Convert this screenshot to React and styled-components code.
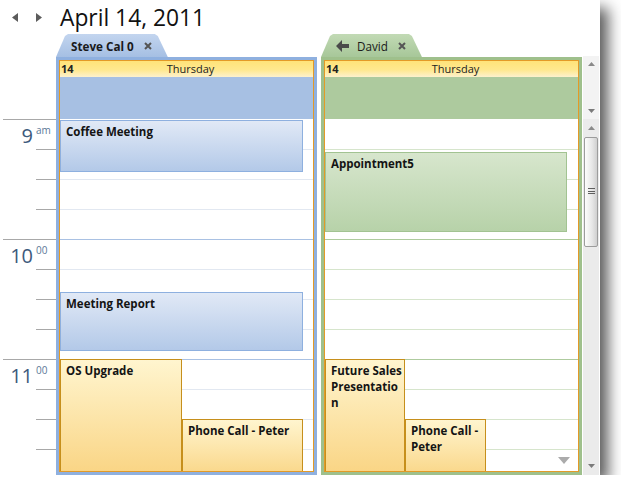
import React from "react";
import styled, { createGlobalStyle } from "styled-components";

const GlobalStyle = createGlobalStyle`
  body {
    margin: 0;
    background: #ffffff;
    font-family: "Open Sans", "Noto Sans", sans-serif;
  }
`;

const palettes = {
  blue: {
    frame: "#8fb0df",
    tabTop: "#c3d5ef",
    tabBottom: "#a5bfe3",
    allDay: "#a7c0e3",
    hour: "#a9c1e3",
    quarter: "#e2e8f1",
  },
  green: {
    frame: "#9fc08c",
    tabTop: "#c2dab5",
    tabBottom: "#a7c799",
    allDay: "#adca9e",
    hour: "#aecb9e",
    quarter: "#d6e5cc",
  },
};

const eventTones = {
  blue: { top: "#e1e9f6", bottom: "#b3c9e8", border: "#8eb0df" },
  green: { top: "#d7e6cd", bottom: "#b7d2a9", border: "#a2c392" },
  yellow: { top: "#fff5cf", bottom: "#f9d27e", border: "#c68f1c" },
};

const calendars = [
  {
    id: "steve",
    name: "Steve Cal 0",
    tone: "blue",
    active: true,
    events: [
      { title: "Coffee Meeting", tone: "blue", top: 1, left: 0, width: 243, height: 52 },
      { title: "Meeting Report", tone: "blue", top: 173, left: 0, width: 243, height: 59 },
      { title: "OS Upgrade", tone: "yellow", top: 240, left: 0, width: 122, height: 125 },
      { title: "Phone Call - Peter", tone: "yellow", top: 300, left: 122, width: 121, height: 65 },
    ],
  },
  {
    id: "david",
    name: "David",
    tone: "green",
    active: false,
    more: true,
    events: [
      { title: "Appointment5", tone: "green", top: 33, left: 0, width: 242, height: 80 },
      { title: "Future Sales Presentation", tone: "yellow", top: 240, left: 0, width: 80, height: 125 },
      { title: "Phone Call - Peter", tone: "yellow", top: 300, left: 80, width: 81, height: 65 },
    ],
  },
];

const hours = [
  { hour: "9", sup: "am" },
  { hour: "10", sup: "00" },
  { hour: "11", sup: "00" },
];

const App = () => {
  return (
    <>
      <GlobalStyle />
      <Window>
        <TopBar>
          <NavButton aria-label="previous day">
            <svg width="6" height="9" viewBox="0 0 6 9">
              <polygon points="6,0 6,9 0,4.5" fill="#5c5c5c" />
            </svg>
          </NavButton>
          <NavButton aria-label="next day">
            <svg width="6" height="9" viewBox="0 0 6 9">
              <polygon points="0,0 0,9 6,4.5" fill="#5c5c5c" />
            </svg>
          </NavButton>
          <Title>April 14, 2011</Title>
        </TopBar>

        <Body>
          <Ruler>
            {hours.map((h) => (
              <HourBlock key={h.hour}>
                <Quarter $hour>
                  <HourLabel>
                    <HourNum>{h.hour}</HourNum>
                    <HourSup>{h.sup}</HourSup>
                  </HourLabel>
                </Quarter>
                <Quarter />
                <Quarter />
                <Quarter />
              </HourBlock>
            ))}
          </Ruler>

          {calendars.map((cal) => (
            <Pane key={cal.id}>
              <Tab $tone={cal.tone}>
                {!cal.active && (
                  <svg width="13" height="12" viewBox="0 0 13 12">
                    <polygon points="0,6 6,0 6,4 13,4 13,8 6,8 6,12" fill="#4a4a4a" />
                  </svg>
                )}
                <TabLabel $active={cal.active}>{cal.name}</TabLabel>
                <CloseIcon width="8" height="8" viewBox="0 0 8 8">
                  <path d="M1 1 L7 7 M7 1 L1 7" stroke="#555" strokeWidth="2" />
                </CloseIcon>
              </Tab>
              <Frame $tone={cal.tone}>
                <Inner>
                  <DayHeader>
                    <DayNum>14</DayNum>
                    <DayName>Thursday</DayName>
                  </DayHeader>
                  <AllDay $tone={cal.tone} />
                  <Slots>
                    {Array.from({ length: 12 }).map((_, i) => (
                      <SlotRow key={i} $tone={cal.tone} $index={i} />
                    ))}
                    {cal.events.map((ev) => (
                      <Event
                        key={ev.title + ev.top}
                        $tone={ev.tone}
                        style={{ top: ev.top, left: ev.left, width: ev.width, height: ev.height }}
                      >
                        {ev.title}
                      </Event>
                    ))}
                  </Slots>
                  {cal.more && (
                    <MoreIndicator width="12" height="7" viewBox="0 0 12 7">
                      <polygon points="0,0 12,0 6,7" fill="#ababab" />
                    </MoreIndicator>
                  )}
                </Inner>
              </Frame>
            </Pane>
          ))}

          <ScrollColumn>
            <MiniScroll>
              <ScrollArrow width="7" height="4" viewBox="0 0 7 4">
                <polygon points="0,4 7,4 3.5,0" fill="#8a8a8a" />
              </ScrollArrow>
              <ScrollArrow width="7" height="4" viewBox="0 0 7 4">
                <polygon points="0,0 7,0 3.5,4" fill="#7a7a7a" />
              </ScrollArrow>
            </MiniScroll>
            <MainScroll>
              <ScrollArrow width="7" height="4" viewBox="0 0 7 4">
                <polygon points="0,4 7,4 3.5,0" fill="#8a8a8a" />
              </ScrollArrow>
              <Thumb>
                <Grip />
              </Thumb>
              <Spacer />
              <ScrollArrow width="7" height="4" viewBox="0 0 7 4">
                <polygon points="0,0 7,0 3.5,4" fill="#7a7a7a" />
              </ScrollArrow>
            </MainScroll>
          </ScrollColumn>
        </Body>
      </Window>
    </>
  );
};

export default App;

const Window = styled.div`
  width: 600px;
  height: 475px;
  background: #ffffff;
  display: flex;
  flex-direction: column;
  box-shadow: 8px 8px 14px rgba(0, 0, 0, 0.65);
  overflow: hidden;
`;

const TopBar = styled.div`
  height: 34px;
  display: flex;
  align-items: center;
  padding-left: 12px;
`;

const NavButton = styled.div`
  width: 24px;
  display: flex;
  align-items: center;
  padding-top: 1px;
`;

const Title = styled.div`
  font-size: 22.8px;
  line-height: 34px;
  color: #111;
  padding-top: 1px;
`;

const Body = styled.div`
  flex: 1;
  min-height: 0;
  display: flex;
`;

const Ruler = styled.div`
  width: 56px;
  padding-top: 85px;
  overflow: hidden;
  flex-shrink: 0;
`;

const HourBlock = styled.div`
  display: flex;
  flex-direction: column;
`;

const Quarter = styled.div`
  box-sizing: border-box;
  height: 30px;
  border-top: 1px solid #a8a8a8;
  margin-left: ${(p) => (p.$hour ? "3px" : "36px")};
`;

const HourLabel = styled.div`
  display: flex;
  align-items: flex-start;
  padding-top: 4px;
`;

const HourNum = styled.span`
  width: 30px;
  text-align: right;
  font-size: 20px;
  line-height: 24px;
  color: #3d5a7c;
`;

const HourSup = styled.span`
  margin-left: 3px;
  font-size: 10px;
  line-height: 12px;
  color: #5b7898;
`;

const Pane = styled.div`
  width: 261px;
  flex-shrink: 0;
  display: flex;
  flex-direction: column;
  & + & {
    margin-left: 4px;
  }
`;

const Tab = styled.div`
  align-self: flex-start;
  height: 22px;
  display: flex;
  align-items: center;
  gap: 8px;
  padding: 1px 16px 0 15px;
  background: linear-gradient(
    ${(p) => palettes[p.$tone].tabTop},
    ${(p) => palettes[p.$tone].tabBottom}
  );
  clip-path: polygon(0 100%, 9px 2px, 12px 0, calc(100% - 13px) 0, calc(100% - 10px) 2px, 100% 100%);
`;

const TabLabel = styled.span`
  font-size: 11.7px;
  font-weight: ${(p) => (p.$active ? 700 : 400)};
  color: #1a1a1a;
  margin-right: 2px;
`;

const CloseIcon = styled.svg`
  display: block;
`;

const Frame = styled.div`
  flex: 1;
  min-height: 0;
  border: 3px solid ${(p) => palettes[p.$tone].frame};
  display: flex;
`;

const Inner = styled.div`
  flex: 1;
  min-width: 0;
  border: 1px solid #e39a27;
  display: flex;
  flex-direction: column;
  overflow: hidden;
  position: relative;
`;

const DayHeader = styled.div`
  height: 16px;
  flex-shrink: 0;
  display: grid;
  align-items: center;
  background: linear-gradient(#ffe379 0%, #ffe88e 55%, #fdf1cd 100%);
  font-size: 11px;
  line-height: 16px;
  color: #222;
`;

const DayNum = styled.span`
  grid-area: 1 / 1;
  justify-self: start;
  font-weight: 700;
  padding-left: 1px;
`;

const DayName = styled.span`
  grid-area: 1 / 1;
  justify-self: center;
  padding-left: 8px;
`;

const AllDay = styled.div`
  height: 42px;
  flex-shrink: 0;
  background: ${(p) => palettes[p.$tone].allDay};
`;

const Slots = styled.div`
  position: relative;
  flex-shrink: 0;
  height: 360px;
  background: #ffffff;
`;

const SlotRow = styled.div`
  box-sizing: border-box;
  height: 30px;
  border-top: ${(p) =>
    p.$index === 0
      ? "1px solid #ffffff"
      : `1px solid ${p.$index % 4 === 0 ? palettes[p.$tone].hour : palettes[p.$tone].quarter}`};
`;

const Event = styled.div`
  position: absolute;
  box-sizing: border-box;
  padding: 3px 1px 0 5px;
  border: 1px solid ${(p) => eventTones[p.$tone].border};
  background: linear-gradient(
    ${(p) => eventTones[p.$tone].top},
    ${(p) => eventTones[p.$tone].bottom}
  );
  font-size: 11.5px;
  line-height: 16px;
  font-weight: 700;
  color: #141414;
  overflow: hidden;
  overflow-wrap: anywhere;
`;

const MoreIndicator = styled.svg`
  position: absolute;
  right: 8px;
  bottom: 7px;
`;

const ScrollColumn = styled.div`
  width: 16px;
  margin-left: 1px;
  margin-top: 22px;
  display: flex;
  flex-direction: column;
`;

const MiniScroll = styled.div`
  height: 63px;
  background: #f3f3f3;
  display: flex;
  flex-direction: column;
  align-items: center;
  justify-content: space-between;
  padding: 6px 0;
  box-sizing: border-box;
`;

const MainScroll = styled.div`
  flex: 1;
  background: #ebebeb;
  display: flex;
  flex-direction: column;
  align-items: center;
  padding: 7px 0;
  box-sizing: border-box;
`;

const ScrollArrow = styled.svg`
  display: block;
  flex-shrink: 0;
`;

const Thumb = styled.div`
  margin-top: 7px;
  width: 14px;
  height: 110px;
  box-sizing: border-box;
  border: 1px solid #9c9c9c;
  border-radius: 2px;
  background: linear-gradient(to right, #fdfdfd, #e6e6e6 60%, #cfcfcf);
  display: flex;
  align-items: center;
  justify-content: center;
`;

const Grip = styled.div`
  width: 7px;
  height: 8px;
  background: repeating-linear-gradient(#5e5e5e 0 1px, transparent 1px 2.5px);
`;

const Spacer = styled.div`
  flex: 1;
`;
